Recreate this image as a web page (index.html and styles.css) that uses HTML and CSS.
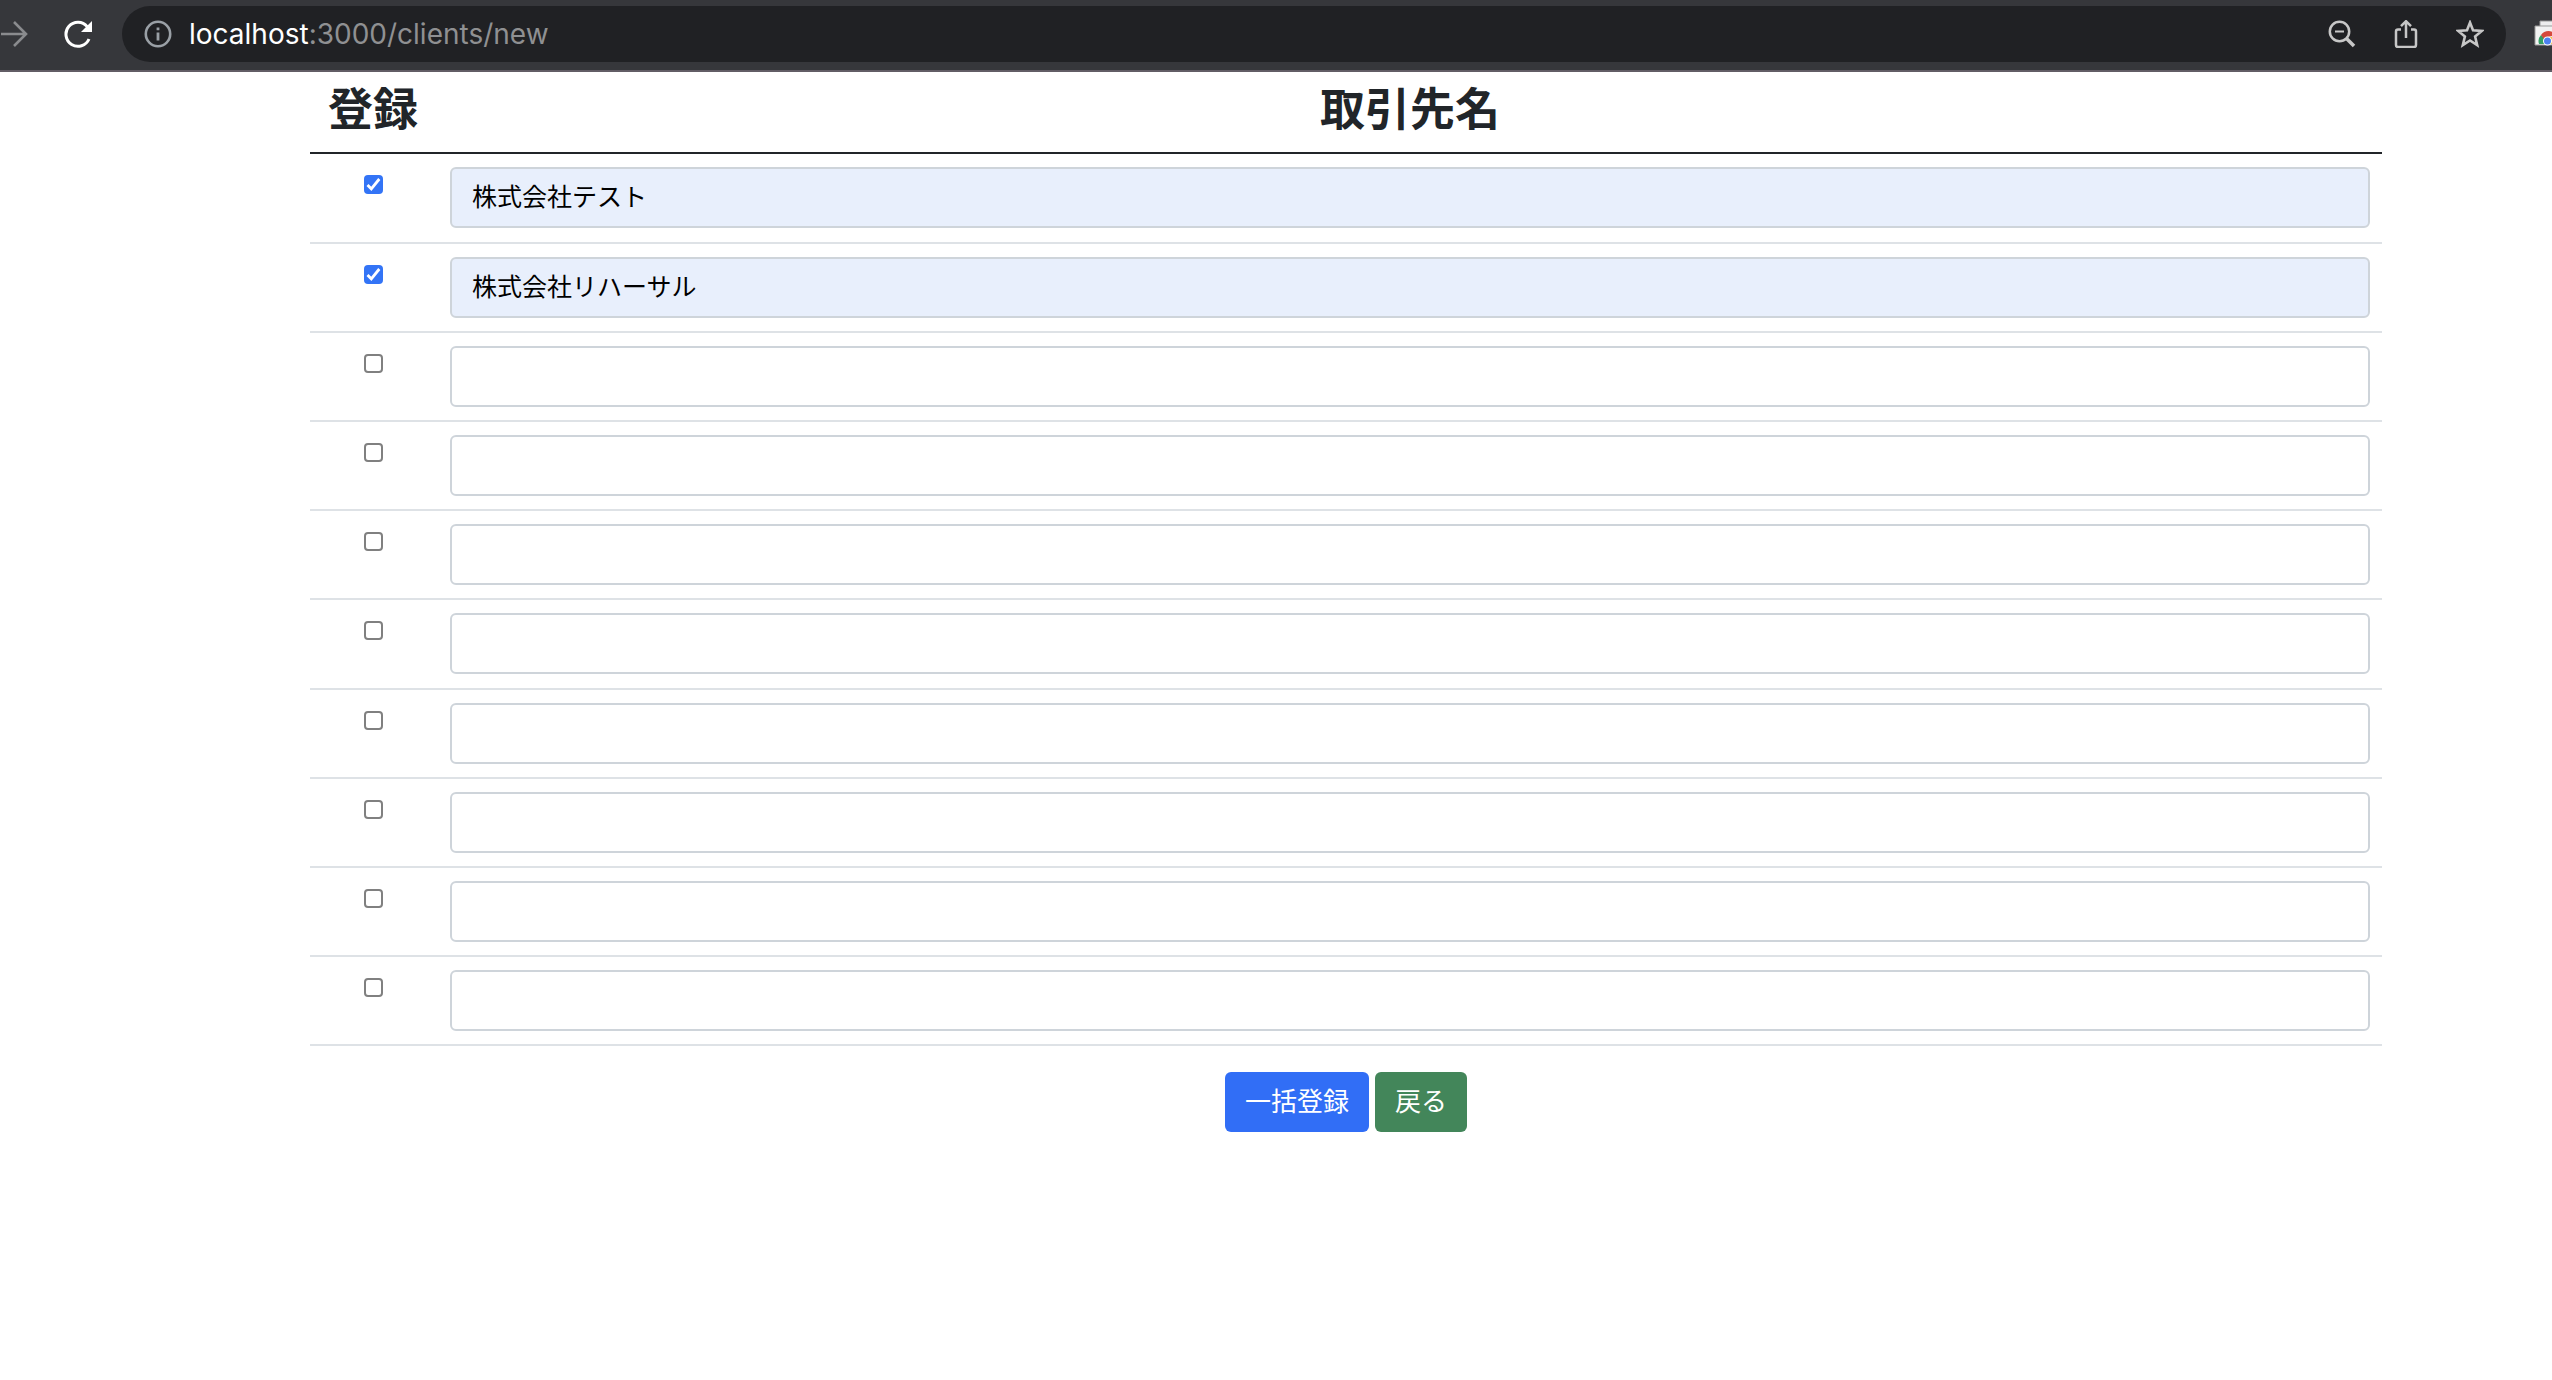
FILE: index.html
```html
<!DOCTYPE html>
<html lang="ja">
<head>
<meta charset="utf-8">
<title>取引先登録</title>
<link rel="stylesheet" href="styles.css">
</head>
<body>
<header class="toolbar">
  <button class="icon-button forward" type="button" aria-label="進む">
    <svg width="28" height="28" viewBox="0 0 28 28" fill="none" stroke="#8a8b8e" stroke-width="2.6"><path d="M1 14H26M14 2L26 14L14 26"/></svg>
  </button>
  <button class="icon-button reload" type="button" aria-label="再読み込み">
    <svg width="28" height="28" viewBox="0 0 28 28"><path d="M23.2 6.6A12 12 0 1 0 25 19" fill="none" stroke="#fff" stroke-width="3"/><path d="M28 1V12H17Z" fill="#fff"/></svg>
  </button>
  <div class="address">
    <svg class="info" width="28" height="28" viewBox="0 0 28 28"><circle cx="14" cy="14" r="12.2" fill="none" stroke="#9aa0a6" stroke-width="2.6"/><path d="M12.6 7.5h2.8v2.8h-2.8zM12.6 12.5h2.8v8h-2.8z" fill="#9aa0a6"/></svg>
    <span class="url"><span class="host">localhost</span>:3000/clients/new</span>
    <div class="actions">
      <button class="icon-button" type="button" aria-label="ズーム"><svg width="28" height="28" viewBox="0 0 28 28" fill="none" stroke="#c7c7c7"><circle cx="11.5" cy="11.5" r="9.7" stroke-width="2.5"/><path d="M7 11.5h9" stroke-width="2"/><path d="M18.5 18.5L26 26" stroke-width="3.6"/></svg></button>
      <button class="icon-button" type="button" aria-label="共有"><svg width="28" height="28" viewBox="0 0 28 28" fill="none" stroke="#c7c7c7" stroke-width="2.5"><path d="M9 9.5H6Q4 9.5 4 11.5V25Q4 27 6 27H22Q24 27 24 25V11.5Q24 9.5 22 9.5H19M14 18V1.5M9 6.2L14 1.2L19 6.2"/></svg></button>
      <button class="icon-button" type="button" aria-label="ブックマーク"><svg width="28" height="28" viewBox="0 0 28 28" fill="none" stroke="#c7c7c7" stroke-width="2.6"><path d="M14 2.6L17 10.2L25.8 10.9L19.1 16.5L21.2 25.1L14 20.5L6.8 25.1L8.9 16.5L2.2 10.9L11 10.2Z"/></svg></button>
    </div>
  </div>
  <button class="icon-button extension" type="button" aria-label="拡張機能">
    <svg width="28" height="28" viewBox="0 0 28 28"><path d="M6 1H28V8H6Z" fill="#eee" stroke="#999"/><path d="M1 6H28V25H1Z" fill="#f2f2f2" stroke="#999"/><path d="M5 24A9 9 0 0 1 7 15L13 20L11 24Z" fill="#34a065"/><path d="M7 15A9 9 0 0 1 22 15L13 17L10 19Z" fill="#d5493c"/><path d="M15 17h9v7h-9z" fill="#f3c33c"/><circle cx="13.5" cy="21" r="4.5" fill="#fff"/><circle cx="13.5" cy="21" r="3.5" fill="#4c80f0"/></svg>
  </button>
</header>
<main class="page">
  <form class="clients">
    <table class="client-table">
      <thead><tr><th class="check-col" scope="col">登録</th><th scope="col">取引先名</th></tr></thead>
      <tbody>
        <tr><td class="check-col"><input class="check" type="checkbox" aria-label="登録 1" checked></td><td><input class="name filled" type="text" aria-label="取引先名 1" value="株式会社テスト"></td></tr>
        <tr><td class="check-col"><input class="check" type="checkbox" aria-label="登録 2" checked></td><td><input class="name filled" type="text" aria-label="取引先名 2" value="株式会社リハーサル"></td></tr>
        <tr><td class="check-col"><input class="check" type="checkbox" aria-label="登録 3"></td><td><input class="name" type="text" aria-label="取引先名 3"></td></tr>
        <tr><td class="check-col"><input class="check" type="checkbox" aria-label="登録 4"></td><td><input class="name" type="text" aria-label="取引先名 4"></td></tr>
        <tr><td class="check-col"><input class="check" type="checkbox" aria-label="登録 5"></td><td><input class="name" type="text" aria-label="取引先名 5"></td></tr>
        <tr><td class="check-col"><input class="check" type="checkbox" aria-label="登録 6"></td><td><input class="name" type="text" aria-label="取引先名 6"></td></tr>
        <tr><td class="check-col"><input class="check" type="checkbox" aria-label="登録 7"></td><td><input class="name" type="text" aria-label="取引先名 7"></td></tr>
        <tr><td class="check-col"><input class="check" type="checkbox" aria-label="登録 8"></td><td><input class="name" type="text" aria-label="取引先名 8"></td></tr>
        <tr><td class="check-col"><input class="check" type="checkbox" aria-label="登録 9"></td><td><input class="name" type="text" aria-label="取引先名 9"></td></tr>
        <tr><td class="check-col"><input class="check" type="checkbox" aria-label="登録 10"></td><td><input class="name" type="text" aria-label="取引先名 10"></td></tr>
      </tbody>
    </table>
    <div class="form-actions">
      <button class="btn primary" type="submit">一括登録</button>
      <a class="btn success" href="/clients">戻る</a>
    </div>
  </form>
</main>
</body>
</html>
```
FILE: styles.css
```css
* { box-sizing: border-box; }

body {
  margin: 0;
  background: #fff;
  color: #212529;
  font-family: "Noto Sans CJK JP", sans-serif;
  font-size: 26px;
  overflow-x: hidden;
}

/* Browser toolbar */
.toolbar {
  display: flex;
  align-items: center;
  height: 72px;
  padding: 0 0 2px;
  background: #36373b;
  border-bottom: 2px solid #625d65;
  overflow: hidden;
}

.icon-button {
  display: flex;
  flex: none;
  padding: 0;
  border: 0;
  background: none;
}

.reload { margin-left: 36px; }

.address {
  display: flex;
  flex: 1;
  align-items: center;
  height: 56px;
  margin: 0 28px 0 30px;
  padding: 0 22px;
  border-radius: 28px;
  background: #202124;
}

.url {
  margin-left: 17px;
  color: #8f9092;
  font-family: Inter, sans-serif;
  font-size: 28px;
  line-height: 32px;
}

.host { color: #fff; }

.actions {
  display: flex;
  gap: 36px;
  margin-left: auto;
}

.extension { width: 18px; overflow: hidden; }
.extension svg { flex: none; }

/* Client registration form */
.clients { margin: 0 170px 0 310px; }

.client-table {
  width: 100%;
  border-collapse: separate;
  border-spacing: 0;
}

.client-table th {
  height: 82px;
  padding: 0 12px 10px;
  border-bottom: 2px solid #212529;
  font-size: 45px;
  font-weight: 700;
  line-height: 68px;
  text-align: center;
}

.client-table td {
  height: 89px;
  padding: 13px 12px;
  border-bottom: 2px solid #dee2e6;
  vertical-align: top;
}

.client-table tr:nth-child(5n + 1) td { height: 90px; }

.client-table .check-col {
  width: 128px;
  padding-right: 14px;
  text-align: center;
}

.check {
  appearance: none;
  display: block;
  width: 19px;
  height: 19px;
  margin: 8px auto 0;
  border: 2px solid #808080;
  border-radius: 4px;
  background: #fff;
}

.check:checked {
  border: 0;
  background: #3374f6 url("data:image/svg+xml,%3Csvg xmlns='http://www.w3.org/2000/svg' viewBox='0 0 19 19'%3E%3Cpath d='M3.5 10L7.3 13.8L15.3 4' fill='none' stroke='white' stroke-width='2.8'/%3E%3C/svg%3E");
}

.name {
  display: block;
  width: 100%;
  height: 61px;
  padding: 0 20px 6px;
  border: 2px solid #ced4da;
  border-radius: 6px;
  background: #fff;
  color: #000;
  font: inherit;
  font-size: 25px;
}

.name.filled { background: #e8effc; }

.form-actions {
  display: flex;
  justify-content: center;
  gap: 6px;
  margin-top: 26px;
}

.btn {
  height: 60px;
  padding: 0 20px 4px;
  border: 0;
  border-radius: 6px;
  color: #fff;
  font: inherit;
  line-height: 56px;
  text-decoration: none;
}

.primary { background: #316ef6; }
.success { background: #43865a; }
```
